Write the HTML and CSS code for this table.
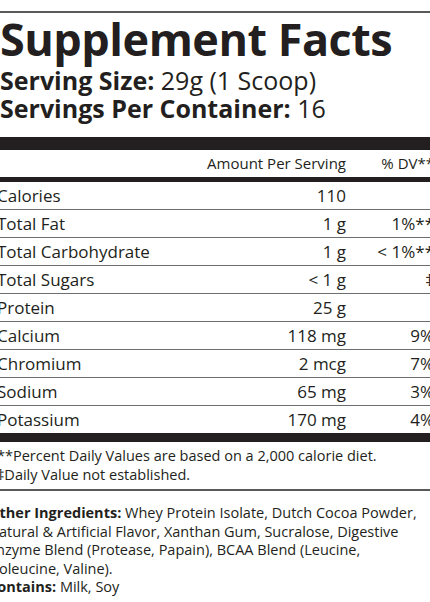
FILE: index.html
```html
<!DOCTYPE html>
<html lang="en">
<head>
    <meta charset="UTF-8">
    <meta name="viewport" content="width=device-width, initial-scale=1.0">
    <title>Supplement Facts</title>
    <link rel="stylesheet" href="styles.css">
</head>
<body>

    <!-- Label -->
    <div class="label">
        <h1>Supplement Facts</h1>
        <p class="serving"><b>Serving Size:</b> 29g (1 Scoop)</p>
        <p class="serving"><b>Servings Per Container:</b> 16</p>

        <!-- Facts table -->
        <div class="facts">
            <div class="facts-head">
                <div class="name"></div>
                <div class="amount">Amount Per Serving</div>
                <div class="dv">% DV**</div>
            </div>
            <div class="row"><div class="name">Calories</div><div class="amount">110</div><div class="dv"></div></div>
            <div class="row"><div class="name">Total Fat</div><div class="amount">1 g</div><div class="dv">1%**</div></div>
            <div class="row"><div class="name">Total Carbohydrate</div><div class="amount">1 g</div><div class="dv">&lt; 1%**</div></div>
            <div class="row"><div class="name">Total Sugars</div><div class="amount">&lt; 1 g</div><div class="dv">&Dagger;</div></div>
            <div class="row"><div class="name">Protein</div><div class="amount">25 g</div><div class="dv"></div></div>
            <div class="row"><div class="name">Calcium</div><div class="amount">118 mg</div><div class="dv">9%</div></div>
            <div class="row"><div class="name">Chromium</div><div class="amount">2 mcg</div><div class="dv">7%</div></div>
            <div class="row"><div class="name">Sodium</div><div class="amount">65 mg</div><div class="dv">3%</div></div>
            <div class="row last"><div class="name">Potassium</div><div class="amount">170 mg</div><div class="dv">4%</div></div>
        </div>

        <!-- Footnotes -->
        <div class="notes">
            <p>**Percent Daily Values are based on a 2,000 calorie diet.</p>
            <p>&Dagger;Daily Value not established.</p>
        </div>

        <!-- Ingredients -->
        <div class="ingredients">
            <p><b>Other Ingredients:</b> Whey Protein Isolate, Dutch Cocoa Powder, Natural &amp; Artificial Flavor, Xanthan Gum, Sucralose, Digestive Enzyme Blend (Protease, Papain), BCAA Blend (Leucine, Isoleucine, Valine).</p>
            <p><b>Contains:</b> Milk, Soy</p>
        </div>
    </div>

</body>
</html>
```

FILE: styles.css
```css
body {
    font-family: "Open Sans", sans-serif;
    background-color: #fff;
    color: #231f20;
    margin: 0;
    padding: 0;
    overflow: hidden;
}
.label {
    width: 437px;
    margin-left: -3px;
    margin-top: 11px;
    border-top: 2px solid #58595b;
}
h1 {
    font-size: 45px;
    font-weight: 700;
    line-height: 50px;
    margin: 1px 0 0 3px;
    letter-spacing: -0.5px;
}
.serving {
    font-size: 25px;
    line-height: 28px;
    margin: 0 0 0 3px;
}
.serving:first-of-type {
    margin-top: 2px;
}
.facts {
    margin-top: 15px;
    font-size: 17px;
}
.facts-head {
    display: flex;
    height: 27px;
    line-height: 27px;
    font-size: 15px;
    border-top: 13px solid #231f20;
    border-bottom: 5px solid #231f20;
}
.row {
    display: flex;
    height: 27px;
    line-height: 27px;
    border-bottom: 1px solid #6d6e71;
}
.row.last {
    border-bottom: 9px solid #231f20;
}
.name {
    flex: 1;
}
.amount {
    width: 160px;
    text-align: right;
}
.dv {
    width: 88px;
    text-align: right;
    white-space: nowrap;
}
.notes {
    padding: 4px 0 5px;
    border-bottom: 2px solid #58595b;
    font-size: 14.5px;
    line-height: 19px;
}
.notes p {
    margin: 0;
}
.ingredients {
    margin-left: -9px;
    padding-top: 13px;
    font-size: 14.5px;
    line-height: 18.5px;
}
.ingredients p {
    margin: 0;
}
```
